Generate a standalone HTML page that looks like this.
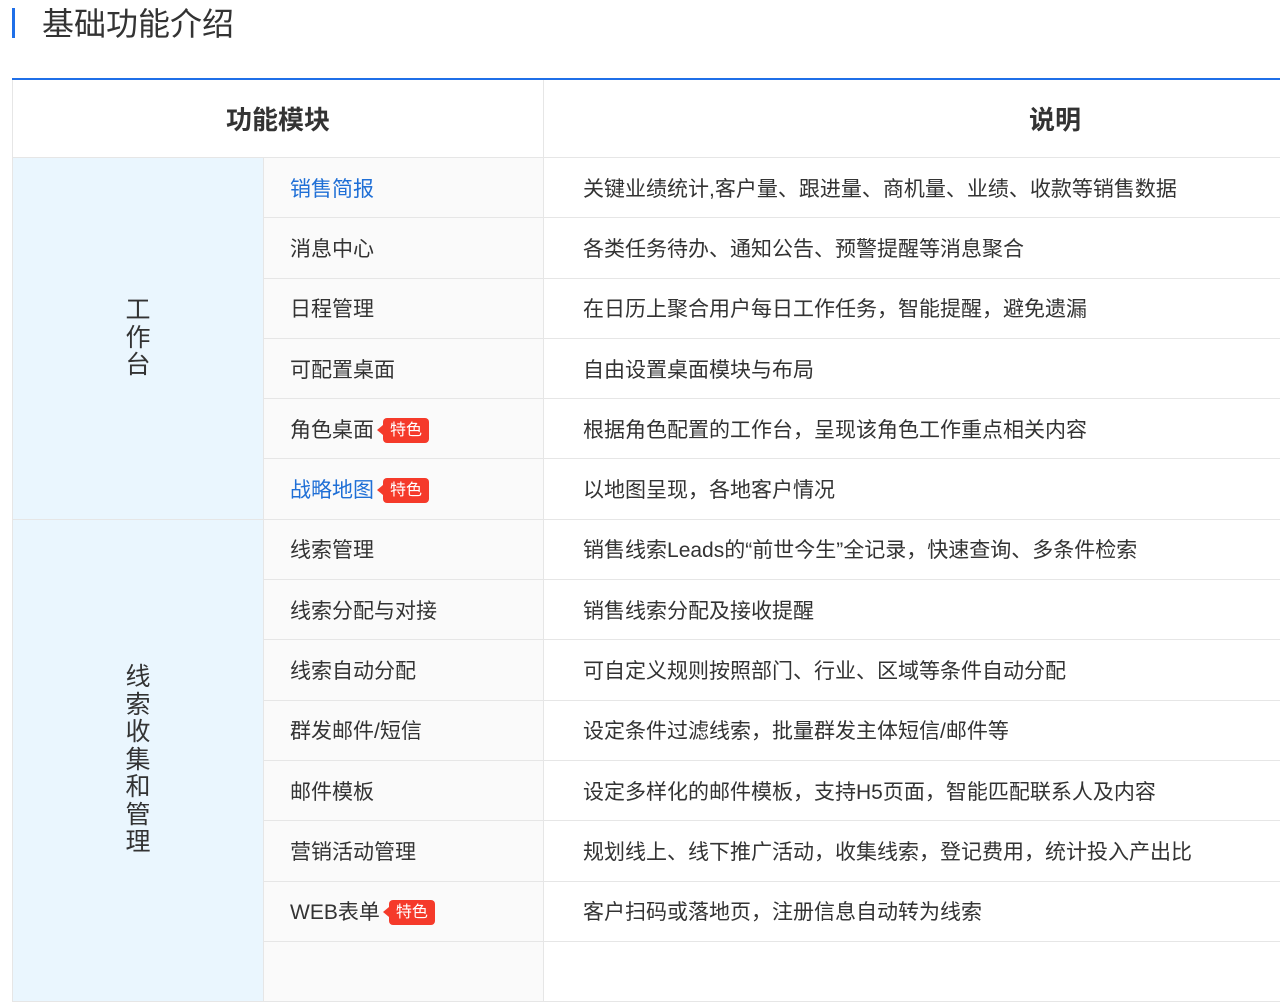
<!DOCTYPE html>
<html><head><meta charset="utf-8"><style>
body{margin:0;width:1280px;height:935px;overflow:hidden;background:#fff;font-family:"Liberation Sans","Noto Sans CJK SC",sans-serif;color:#333;}
.title{position:absolute;left:12px;top:8px;height:30px;border-left:3px solid #1f6fe8;}
.title span{position:absolute;left:27px;top:-4px;font-size:32px;white-space:nowrap;color:#333;line-height:40px;}
table{position:absolute;left:12px;top:78px;width:1555px;border-collapse:collapse;border-top:2px solid #1f6fe8;table-layout:fixed;}
td,th{border:1px solid #e6e6e6;font-size:21px;padding:0;white-space:nowrap;}
th{height:77px;font-size:26px;font-weight:bold;color:#333;}
td{height:59.3px;}
td.g{background:#eaf6fe;text-align:center;font-size:25px;line-height:27.5px;}
td.n{background:#fafafa;padding-left:26px;}
td.d{padding-left:39px;}
.b{color:#1f6fd6;}
.tag{display:inline-block;position:relative;background:#f53a2a;color:#fff;font-size:16px;line-height:25px;height:25px;padding:0 7px;border-radius:4px;margin-left:9px;vertical-align:2px;}
.tag:before{content:"";position:absolute;left:-6px;top:7px;border-right:6px solid #f53a2a;border-top:5px solid transparent;border-bottom:5px solid transparent;}
</style></head><body>
<div class="title"><span>基础功能介绍</span></div>
<table>
<colgroup><col style="width:251px"><col style="width:280px"><col></colgroup>
<tr><th colspan="2">功能模块</th><th>说明</th></tr>
<tr><td class="g" rowspan="6">工<br>作<br>台</td><td class="n b">销售简报</td><td class="d">关键业绩统计,客户量、跟进量、商机量、业绩、收款等销售数据</td></tr>
<tr><td class="n">消息中心</td><td class="d">各类任务待办、通知公告、预警提醒等消息聚合</td></tr>
<tr><td class="n">日程管理</td><td class="d">在日历上聚合用户每日工作任务，智能提醒，避免遗漏</td></tr>
<tr><td class="n">可配置桌面</td><td class="d">自由设置桌面模块与布局</td></tr>
<tr><td class="n">角色桌面<span class="tag">特色</span></td><td class="d">根据角色配置的工作台，呈现该角色工作重点相关内容</td></tr>
<tr><td class="n b">战略地图<span class="tag">特色</span></td><td class="d">以地图呈现，各地客户情况</td></tr>
<tr><td class="g" rowspan="8">线<br>索<br>收<br>集<br>和<br>管<br>理</td><td class="n">线索管理</td><td class="d">销售线索Leads的“前世今生”全记录，快速查询、多条件检索</td></tr>
<tr><td class="n">线索分配与对接</td><td class="d">销售线索分配及接收提醒</td></tr>
<tr><td class="n">线索自动分配</td><td class="d">可自定义规则按照部门、行业、区域等条件自动分配</td></tr>
<tr><td class="n">群发邮件/短信</td><td class="d">设定条件过滤线索，批量群发主体短信/邮件等</td></tr>
<tr><td class="n">邮件模板</td><td class="d">设定多样化的邮件模板，支持H5页面，智能匹配联系人及内容</td></tr>
<tr><td class="n">营销活动管理</td><td class="d">规划线上、线下推广活动，收集线索，登记费用，统计投入产出比</td></tr>
<tr><td class="n">WEB表单<span class="tag">特色</span></td><td class="d">客户扫码或落地页，注册信息自动转为线索</td></tr>
<tr><td class="n">&nbsp;</td><td class="d">&nbsp;</td></tr>
</table>
</body></html>
